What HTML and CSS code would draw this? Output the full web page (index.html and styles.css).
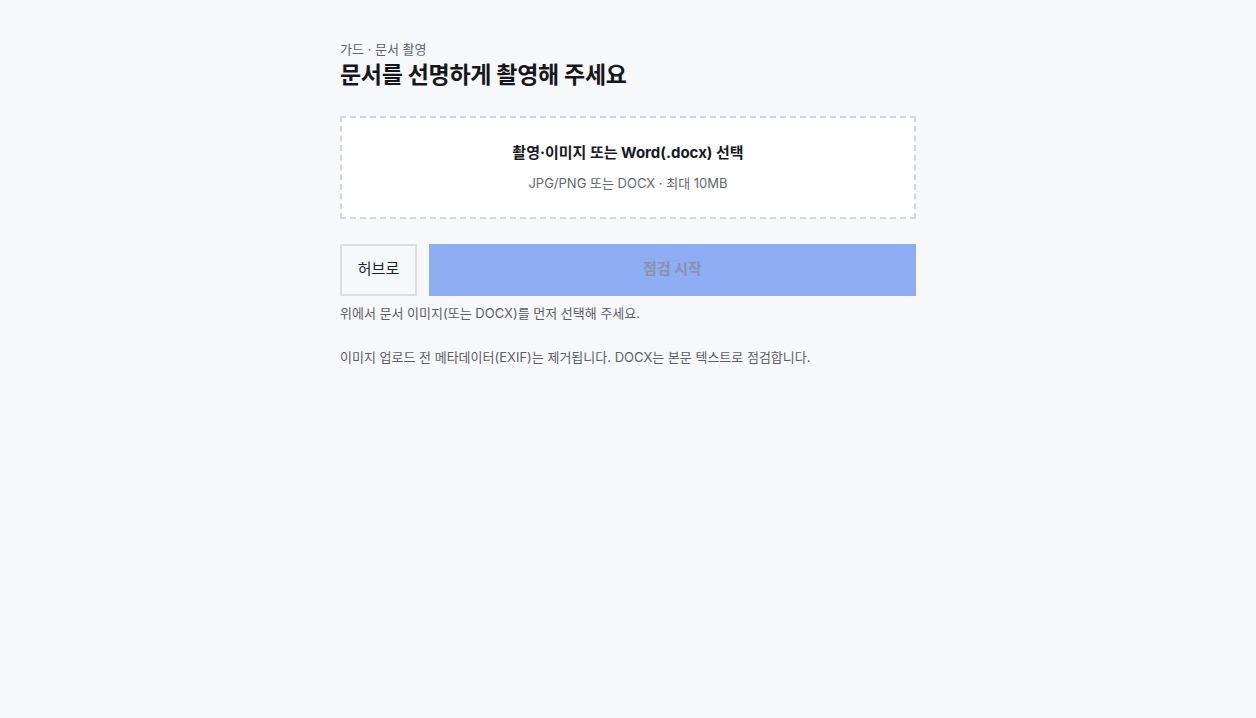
FILE: index.html
```html
<!DOCTYPE html>
<html lang="ko">
<head>
    <meta charset="UTF-8">
    <meta name="viewport" content="width=device-width, initial-scale=1.0">
    <title>가드 · 문서 촬영</title>
    <link rel="stylesheet" href="styles.css">
</head>
<body>
    <main class="guard">
        <p class="crumb">가드 · 문서 촬영</p>
        <h1 class="title">문서를 선명하게 촬영해 주세요</h1>

        <label class="drop">
            <input type="file" accept="image/jpeg,image/png,.docx">
            <span class="drop-main">촬영·이미지 또는 Word(.docx) 선택</span>
            <span class="drop-sub">JPG/PNG 또는 DOCX · 최대 10MB</span>
        </label>

        <div class="actions">
            <button class="btn-hub" type="button">허브로</button>
            <button class="btn-start" type="button" disabled>점검 시작</button>
        </div>

        <p class="hint">위에서 문서 이미지(또는 DOCX)를 먼저 선택해 주세요.</p>
        <p class="note">이미지 업로드 전 메타데이터(EXIF)는 제거됩니다. DOCX는 본문 텍스트로 점검합니다.</p>
    </main>
</body>
</html>
```

FILE: styles.css
```css
html, body{
    margin: 0;
    padding: 0;
}

body{
    background-color: #f7f8fa;
    font-family: "Inter", "Noto Sans CJK KR", sans-serif;
    color: #1a1c20;
}

.guard{
    width: 576px;
    margin: 0 auto;
    padding-top: 40px;
}

.crumb{
    margin: 0;
    font-size: 13px;
    line-height: 18px;
    color: #5f636b;
}

.title{
    margin: 1px 0 0;
    font-size: 23px;
    line-height: 32px;
    font-weight: 700;
    letter-spacing: -0.3px;
    color: #15171b;
}

.drop{
    display: flex;
    flex-direction: column;
    align-items: center;
    margin-top: 25px;
    padding: 24px 0;
    border: 2px dashed #d3d6de;
    background-color: #fff;
    cursor: pointer;
}

.drop input{
    display: none;
}

.drop-main{
    font-size: 15px;
    line-height: 22px;
    font-weight: 700;
    color: #17191d;
}

.drop-sub{
    margin-top: 9px;
    font-size: 13px;
    line-height: 20px;
    color: #62666e;
}

.actions{
    display: flex;
    gap: 12px;
    margin-top: 25px;
    height: 52px;
}

.actions button{
    padding: 0 0 3px;
    font-family: inherit;
    font-size: 15px;
    line-height: 20px;
    cursor: pointer;
}

.btn-hub{
    width: 77px;
    border: 2px solid #dcdee2;
    background-color: #f7f8fa;
    color: #1c1e22;
}

.btn-start{
    flex: 1;
    border: 0;
    background-color: #8fadf3;
    color: #8892a6;
    font-weight: 700;
}

.btn-start:disabled{
    cursor: not-allowed;
}

.hint, .note{
    margin: 7px 0 0;
    font-size: 13px;
    line-height: 20px;
    color: #5a5e66;
}

.note{
    margin-top: 24px;
}
```
